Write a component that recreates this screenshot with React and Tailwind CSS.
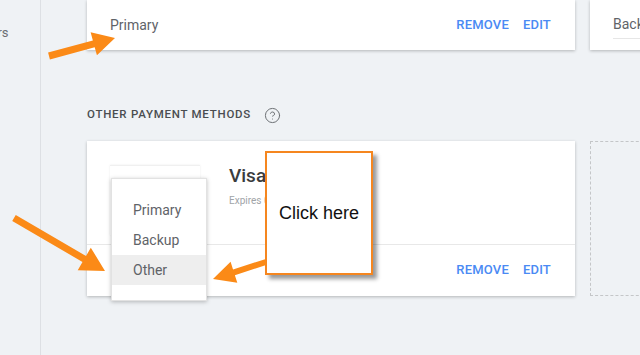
import { CircleHelp } from "lucide-react";

// arrow polygon from tail to tip, drawn as one shape
function arrowPoints([x1, y1], [x2, y2], shaft = 5, headLen = 20, headW = 22) {
  const dx = x2 - x1;
  const dy = y2 - y1;
  const len = Math.hypot(dx, dy);
  const ux = dx / len;
  const uy = dy / len;
  const nx = -uy;
  const ny = ux;
  const bx = x2 - ux * headLen;
  const by = y2 - uy * headLen;
  const s = shaft / 2;
  const h = headW / 2;
  const pts = [
    [x1 + nx * s, y1 + ny * s],
    [bx + nx * s, by + ny * s],
    [bx + nx * h, by + ny * h],
    [x2, y2],
    [bx - nx * h, by - ny * h],
    [bx - nx * s, by - ny * s],
    [x1 - nx * s, y1 - ny * s],
  ];
  return pts.map((p) => p.join(",")).join(" ");
}

function Annotations() {
  const color = "#fb8a17";
  return (
    <svg
      className="absolute inset-0 pointer-events-none"
      width="640"
      height="355"
      viewBox="0 0 640 355"
    >
      <polygon points={arrowPoints([49, 56], [115, 38], 7, 22, 24)} fill={color} />
      <polygon points={arrowPoints([14, 218], [105, 271], 7, 24, 26)} fill={color} />
      <polygon points={arrowPoints([266, 262], [213, 279], 6, 22, 22)} fill={color} />
    </svg>
  );
}

function Actions() {
  return (
    <div className="flex items-center gap-[14px] text-[13px] font-medium text-[#4a8af4] tracking-[0.2px]">
      <span>REMOVE</span>
      <span>EDIT</span>
    </div>
  );
}

function Dropdown() {
  const items = ["Primary", "Backup", "Other"];
  return (
    <div className="absolute left-[24px] top-[37px] w-[96px] bg-white border border-[#e2e2e2] shadow-[0_1px_4px_rgba(0,0,0,0.25)] pt-[16px] pb-[15px]">
      {items.map((it) => (
        <div
          key={it}
          className={
            "h-[30px] flex items-center pl-[21px] text-[14px] text-[#5f6368] " +
            (it === "Other" ? "bg-[#eeeeee]" : "")
          }
        >
          {it}
        </div>
      ))}
    </div>
  );
}

function CalloutBox() {
  return (
    <div className="absolute left-[178px] top-[10px] w-[108px] h-[124px] bg-white border-2 border-[#f5861f] shadow-[4px_4px_4px_rgba(0,0,0,0.4)] flex items-center justify-center">
      <span className="text-[18px] text-[#111] font-['Liberation_Sans',Arial,sans-serif]">
        Click here
      </span>
    </div>
  );
}

export default function App() {
  return (
    <div className="relative w-[640px] h-[355px] overflow-hidden flex bg-[#eff2f5] font-['Roboto','Noto_Sans',sans-serif]">
      <aside className="w-[41px] shrink-0 border-r border-[#dde0e4] overflow-hidden pt-[23px]">
        <div className="whitespace-nowrap text-[13px] text-[#6b6f73] -ml-[30px]">Orders</div>
      </aside>

      <main className="flex-1 pl-[46px]">
        <div className="flex gap-[15px]">
          <div className="w-[488px] shrink-0 h-[50px] bg-white shadow-[0_1px_3px_rgba(0,0,0,0.25)] flex items-center justify-between pl-[23px] pr-[24px]">
            <span className="text-[14px] text-[#5f6368]">Primary</span>
            <Actions />
          </div>
          <div className="w-[120px] shrink-0 h-[50px] bg-white shadow-[0_1px_3px_rgba(0,0,0,0.25)] pl-[23px] pt-[14px]">
            <div className="text-[14px] text-[#5f6368] border-b border-[#e6e6e6] pb-[3px]">Backup</div>
          </div>
        </div>

        <div className="mt-[57px] h-[16px] flex items-center gap-[13px]">
          <span className="text-[11.5px] font-medium tracking-[0.75px] text-[#4a4d50]">
            OTHER PAYMENT METHODS
          </span>
          <CircleHelp size={17} strokeWidth={1.4} color="#6b6f73" />
        </div>

        <div className="mt-[18px] flex gap-[15px]">
          <div className="relative w-[488px] shrink-0 h-[155px] bg-white shadow-[0_1px_3px_rgba(0,0,0,0.25)]">
            <div className="h-[104px] border-b border-[#e8e8e8] flex pl-[23px] pt-[24px]">
              <div className="w-[90px] h-[70px] border-t border-[#f0f0f0] shadow-[0_0_2px_rgba(0,0,0,0.08)]" />
              <div className="ml-[29px] -mt-[2px]">
                <div className="text-[19px] font-medium text-[#3a3c3e] leading-[26px]">Visa</div>
                <div className="text-[10px] text-[#a0a4a8] mt-[4px]">Expires 09/2021</div>
              </div>
            </div>
            <div className="h-[50px] flex items-center justify-end pr-[24px]">
              <Actions />
            </div>
            <Dropdown />
            <CalloutBox />
          </div>
          <div className="w-[120px] shrink-0 h-[155px] border border-dashed border-[#c4c6c8]" />
        </div>
      </main>

      <Annotations />
    </div>
  );
}
